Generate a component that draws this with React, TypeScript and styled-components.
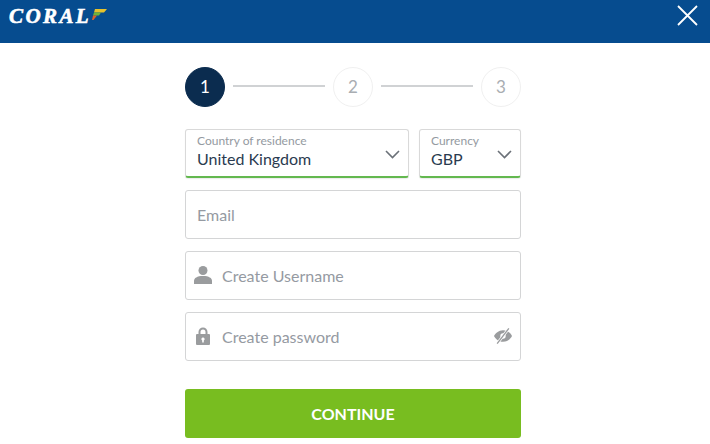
import React from "react";
import styled, { createGlobalStyle } from "styled-components";

const Global = createGlobalStyle`
  html, body {
    margin: 0;
    padding: 0;
    background: #fff;
    font-family: Lato, "Open Sans", sans-serif;
  }
  * { box-sizing: border-box; }
`;

const Page = styled.div`
  width: 710px;
  height: 444px;
  overflow: hidden;
`;

const Header = styled.header`
  height: 43px;
  background: #064c8f;
  display: flex;
  align-items: flex-start;
  justify-content: space-between;
  padding: 4px 12px 0 9px;
`;

const Logo = styled.div`
  display: flex;
  align-items: flex-start;
`;

const LogoText = styled.span`
  font-family: "Liberation Serif", serif;
  font-weight: 700;
  font-style: italic;
  font-size: 21px;
  line-height: 24px;
  letter-spacing: 2.400px;
  color: #fff;
  -webkit-text-stroke: 0.6px #fff;
`;

const LogoFlag = styled.svg`
  width: 16px;
  height: 14px;
  margin: 4px 0 0 0;
`;

const CloseButton = styled.div`
  width: 21px;
  height: 21px;
  margin-top: 1px;
  color: #fff;
  display: flex;
`;

const Form = styled.main`
  width: 336px;
  padding-top: 24px;
  margin-left: 185px;
  display: flex;
  flex-direction: column;
`;

const Stepper = styled.div`
  display: flex;
  align-items: center;
  gap: 8px;
  margin-bottom: 22px;
`;

const Step = styled.div<{ $active?: boolean }>`
  width: 40px;
  height: 40px;
  flex: none;
  border-radius: 50%;
  display: flex;
  align-items: center;
  justify-content: center;
  font-size: 17px;
  padding-bottom: 1px;
  background: ${(p) => (p.$active ? "#0b2c4f" : "#fff")};
  color: ${(p) => (p.$active ? "#fff" : "#a9adb2")};
  border: 1px solid ${(p) => (p.$active ? "#0b2c4f" : "#f0f0f0")};
`;

const StepLine = styled.div`
  flex: 1;
  height: 2px;
  margin-bottom: 2px;
  background: #d0d2d4;
`;

const SelectRow = styled.div`
  display: flex;
  gap: 10px;
  margin-bottom: 12px;
`;

const Select = styled.div<{ $width: number }>`
  position: relative;
  width: ${(p) => p.$width}px;
  height: 49px;
  border: 1px solid #d9d9d9;
  border-bottom: 2px solid #63b84f;
  border-radius: 3px;
  padding: 4px 11px 0;
  box-shadow: 0 1px 1px rgba(0, 0, 0, 0.08);
`;

const SelectLabel = styled.div`
  font-size: 12px;
  line-height: 14px;
  color: #949aa1;
`;

const SelectValue = styled.div`
  font-size: 16px;
  line-height: 20px;
  margin-top: 1px;
  color: #2a3b50;
`;

const Chevron = styled.svg`
  position: absolute;
  right: 8px;
  top: 20px;
  width: 15px;
  height: 9px;
  fill: none;
  stroke: #6b7178;
  stroke-width: 1.6;
`;

const Field = styled.div`
  height: 49px;
  border: 1px solid #d4d5d6;
  border-radius: 3px;
  display: flex;
  align-items: center;
  padding: 0 8px 1px 11px;
  margin-bottom: 12px;
`;

const FieldIcon = styled.svg`
  width: 20px;
  height: 20px;
  flex: none;
  margin-left: -4px;
  margin-right: 9px;
  fill: #9a9c9e;
`;

const Placeholder = styled.span`
  flex: 1;
  font-size: 16px;
  color: #959aa2;
`;

const EyeIcon = styled.svg`
  width: 18px;
  height: 18px;
  flex: none;
  fill: #9a9c9e;
`;

const ContinueButton = styled.button`
  margin-top: 16px;
  height: 49px;
  border: 0;
  border-radius: 3px;
  background: #78bd20;
  color: #fff;
  font-family: inherit;
  font-size: 16px;
  font-weight: 700;
`;

export default function App() {
  return (
    <Page>
      <Global />
      <Header>
        <Logo>
          <LogoText>CORAL</LogoText>
          <LogoFlag viewBox="0 0 16 14">
            <path d="M4 1h12l-3 3.500H3z" fill="#e6c22c" />
            <path d="M3 4.500h7l-2 3H2z" fill="#6fb43a" />
            <path d="M2 7.500h4L2.500 12H1z" fill="#d9622b" />
          </LogoFlag>
        </Logo>
        <CloseButton>
          <svg width="21" height="21" viewBox="0 0 21 21" fill="none" stroke="currentColor" strokeWidth="1.8">
            <path d="M1 1l19 19M20 1L1 20" />
          </svg>
        </CloseButton>
      </Header>
      <Form>
        <Stepper>
          <Step $active>1</Step>
          <StepLine />
          <Step>2</Step>
          <StepLine />
          <Step>3</Step>
        </Stepper>
        <SelectRow>
          <Select $width={224}>
            <SelectLabel>Country of residence</SelectLabel>
            <SelectValue>United Kingdom</SelectValue>
            <Chevron viewBox="0 0 15 9"><path d="M1 1l6.500 6.500L14 1" /></Chevron>
          </Select>
          <Select $width={102}>
            <SelectLabel>Currency</SelectLabel>
            <SelectValue>GBP</SelectValue>
            <Chevron viewBox="0 0 15 9"><path d="M1 1l6.500 6.500L14 1" /></Chevron>
          </Select>
        </SelectRow>
        <Field>
          <Placeholder>Email</Placeholder>
        </Field>
        <Field>
          <FieldIcon viewBox="0 0 20 20">
            <circle cx="10" cy="5.500" r="4.500" />
            <path d="M1 19v-3c0-3 3-5 9-5s9 2 9 5v3z" />
          </FieldIcon>
          <Placeholder>Create Username</Placeholder>
        </Field>
        <Field>
          <FieldIcon viewBox="0 0 20 20">
            <path
              fillRule="evenodd"
              d="M5.500 8V6a4.500 4.500 0 0 1 9 0v2H16a1 1 0 0 1 1 1v9a1 1 0 0 1-1 1H4a1 1 0 0 1-1-1V9a1 1 0 0 1 1-1zm2 0h5V6a2.500 2.500 0 0 0-5 0zM10 11.500a1.600 1.600 0 0 0-.8 3V16.500h1.600v-2a1.600 1.600 0 0 0-.8-3z"
            />
          </FieldIcon>
          <Placeholder>Create password</Placeholder>
          <EyeIcon viewBox="0 0 20 20">
            <path d="M10 3.500C5 3.500 1.500 7 0 10c1.500 3 5 6.500 10 6.500s8.500-3.500 10-6.500c-1.500-3-5-6.500-10-6.500z" />
            <circle cx="10" cy="10" r="3" fill="#fff" />
            <path d="M3.500 18.500L16.500 1.500" stroke="#fff" strokeWidth="3" />
            <path d="M3.500 18.500L16.500 1.500" stroke="#9a9c9e" strokeWidth="1.500" />
          </EyeIcon>
        </Field>
        <ContinueButton>CONTINUE</ContinueButton>
      </Form>
    </Page>
  );
}
